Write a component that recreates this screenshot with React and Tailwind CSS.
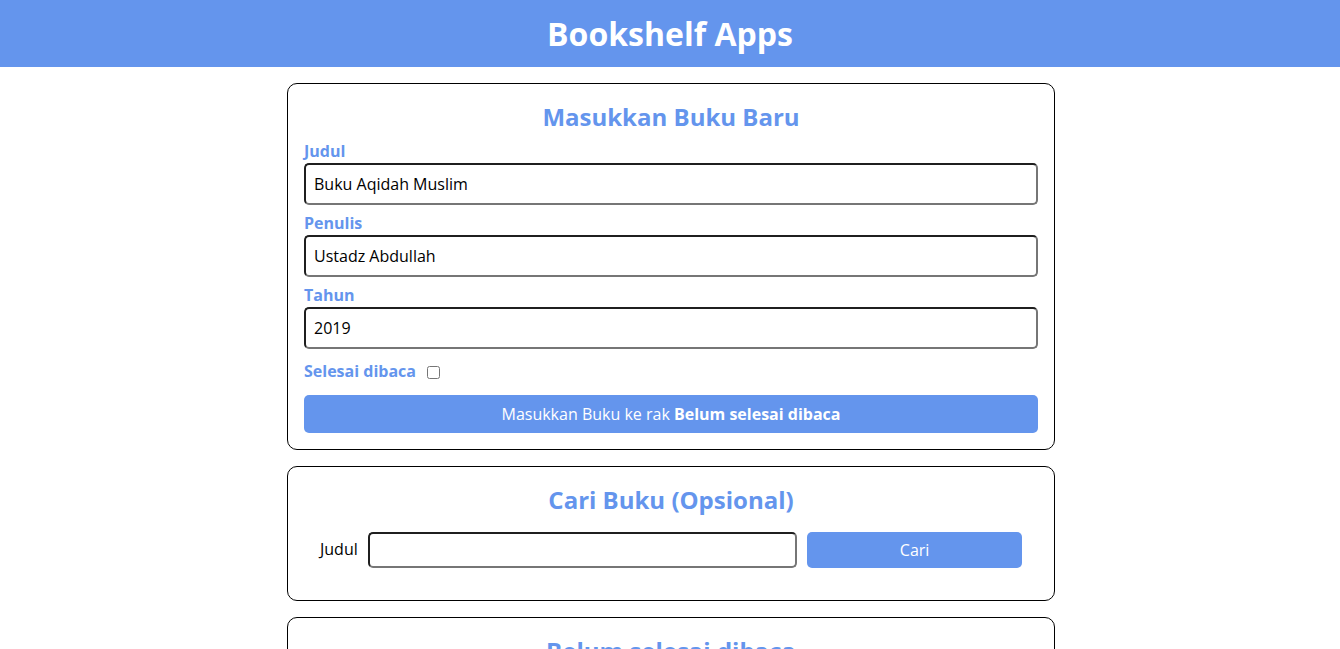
import { useState } from "react"

const inputBorder =
  "border-2 border-t-[#1f1f1f] border-l-[#1f1f1f] border-b-[#767676] border-r-[#767676] rounded-[5px] bg-white text-black outline-none"

export default function App() {
  const [title, setTitle] = useState("Buku Aqidah Muslim")
  const [author, setAuthor] = useState("Ustadz Abdullah")
  const [year, setYear] = useState("2019")
  const [done, setDone] = useState(false)
  const [query, setQuery] = useState("")

  return (
    <div className="min-h-screen bg-white font-['Open_Sans',sans-serif] text-black">
      {/* Header */}
      <header className="flex items-center justify-center bg-[#6495ed] p-3 text-white">
        <h1 className="text-[32px] font-bold leading-[43px]">Bookshelf Apps</h1>
      </header>

      <main className="mx-auto w-4/5 max-w-[800px] pt-4 pb-4 pl-[17px] pr-[15px]">
        {/* Input section */}
        <section className="flex flex-col rounded-[10px] border border-black p-4">
          <h2 className="text-center text-2xl font-bold leading-[33.2px] text-[#6495ed]">
            Masukkan Buku Baru
          </h2>
          <form onSubmit={(e) => e.preventDefault()}>
            <div className="my-2">
              <label className="block font-bold leading-[21.8px] text-[#6495ed]">Judul</label>
              <input
                type="text"
                value={title}
                onChange={(e) => setTitle(e.target.value)}
                className={`${inputBorder} block w-full p-2 text-base leading-[22px]`}
              />
            </div>
            <div className="my-2">
              <label className="block font-bold leading-[21.8px] text-[#6495ed]">Penulis</label>
              <input
                type="text"
                value={author}
                onChange={(e) => setAuthor(e.target.value)}
                className={`${inputBorder} block w-full p-2 text-base leading-[22px]`}
              />
            </div>
            <div className="my-2">
              <label className="block font-bold leading-[21.8px] text-[#6495ed]">Tahun</label>
              <input
                type="number"
                value={year}
                onChange={(e) => setYear(e.target.value)}
                className={`${inputBorder} block w-full p-2 text-base leading-[22px] [appearance:textfield]`}
              />
            </div>
            <div className="mt-[12.6px] mb-3 flex items-center">
              <label className="mr-2.5 font-bold leading-[21.8px] text-[#6495ed]">Selesai dibaca</label>
              <input
                type="checkbox"
                checked={done}
                onChange={(e) => setDone(e.target.checked)}
                className="my-[3px] ml-px h-[13px] w-[13px]"
              />
            </div>
            <button
              type="submit"
              className="block w-full cursor-pointer rounded-[5px] bg-[#6495ed] p-2 text-base leading-[22px] text-white"
            >
              Masukkan Buku ke rak <span className="font-bold">{done ? "Selesai dibaca" : "Belum selesai dibaca"}</span>
            </button>
          </form>
        </section>

        {/* Search section */}
        <section className="my-4 flex flex-col items-center rounded-[10px] border border-black px-4 pt-[17px] pb-4">
          <h2 className="text-2xl font-bold leading-[32.7px] text-[#6495ed]">Cari Buku (Opsional)</h2>
          <form
            onSubmit={(e) => e.preventDefault()}
            className="grid w-full grid-cols-[auto_1fr_0.5fr] gap-2.5 px-4 pt-[15px] pb-4"
          >
            <label className="flex items-center leading-[21.8px]">Judul</label>
            <input
              type="text"
              value={query}
              onChange={(e) => setQuery(e.target.value)}
              className={`${inputBorder} p-[5px] text-base leading-[22px]`}
            />
            <button
              type="submit"
              className="cursor-pointer rounded-[5px] bg-[#6495ed] text-base text-white"
            >
              Cari
            </button>
          </form>
        </section>

        {/* Shelf */}
        <section className="mt-4 rounded-[10px] border border-black p-4">
          <h2 className="text-center text-2xl font-bold leading-[33.7px] text-[#6495ed]">Belum selesai dibaca</h2>
          <div className="min-h-[120px]"></div>
        </section>
      </main>
    </div>
  )
}
